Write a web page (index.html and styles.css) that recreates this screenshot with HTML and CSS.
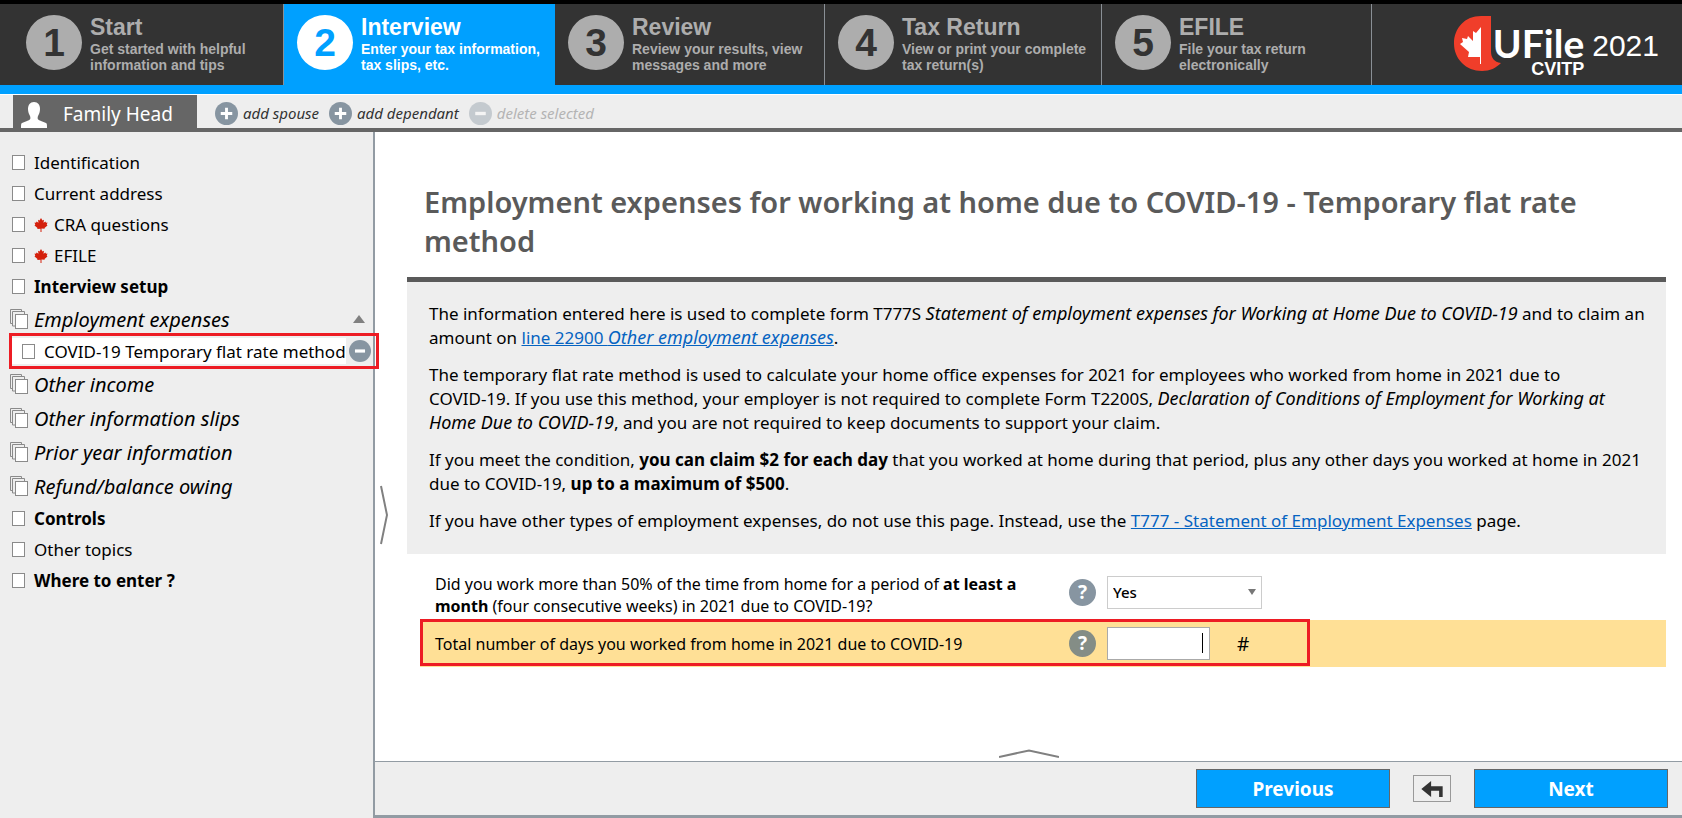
FILE: index.html
```html
<!DOCTYPE html>
<html lang="en">
<head>
<meta charset="utf-8">
<title>UFile CVITP 2021 - Interview</title>
<link rel="stylesheet" href="styles.css">
</head>
<body>
<svg class="defs" aria-hidden="true">
  <symbol id="page" viewBox="0 0 13 15"><rect x="0.5" y="0.5" width="12" height="14" fill="#fff" stroke="#8a8a8a"/></symbol>
  <symbol id="pages" viewBox="0 0 18 20"><path d="M.5 14.500V.5h11v14z" fill="#eee" stroke="#8a8a8a"/><path d="M2.500 17V2.500h12V17z" fill="#eee" stroke="#8a8a8a"/><rect x="5.500" y="5.500" width="12" height="14" fill="#fff" stroke="#8a8a8a"/></symbol>
  <symbol id="leaf" viewBox="0 0 26 28"><path d="M13 0l3 5 3-1.500-1 6 4-2.500 1 2.500 3-.500-1.500 4.500 1.500 1.500-6 5 .5 1.500-6.500-.5V28h-2v-6.500L5.500 22 6 20l-6-5 1.500-1.500L0 9l3 .5L4 7l4 2.500-1-6L10 5z" fill="#d4200c"/></symbol>
  <symbol id="plus" viewBox="0 0 24 24"><circle cx="12" cy="12" r="12" fill="#8795a1"/><path d="M12 6v12M6 12h12" stroke="#fff" stroke-width="3"/></symbol>
  <symbol id="minus" viewBox="0 0 24 24"><circle cx="12" cy="12" r="12" fill="#8795a1"/><path d="M6.500 12h11" stroke="#fff" stroke-width="3.500"/></symbol>
</svg>

<header class="header">
  <nav class="steps" aria-label="Steps">
    <a class="step step-first" href="#start"><span class="num">1</span><span class="step-text"><b class="step-title">Start</b><span class="step-sub">Get started with helpful<br>information and tips</span></span></a>
    <a class="step step-active" href="#interview"><span class="num">2</span><span class="step-text"><b class="step-title">Interview</b><span class="step-sub">Enter your tax information,<br>tax slips, etc.</span></span></a>
    <a class="step" href="#review"><span class="num">3</span><span class="step-text"><b class="step-title">Review</b><span class="step-sub">Review your results, view<br>messages and more</span></span></a>
    <a class="step step-wide" href="#return"><span class="num">4</span><span class="step-text"><b class="step-title">Tax Return</b><span class="step-sub">View or print your complete<br>tax return(s)</span></span></a>
    <a class="step" href="#efile"><span class="num">5</span><span class="step-text"><b class="step-title">EFILE</b><span class="step-sub">File your tax return<br>electronically</span></span></a>
  </nav>
  <div class="logo">
    <svg class="logo-mark" viewBox="0 0 47 55" aria-hidden="true">
      <path d="M37 0H27C11 0 0 12 0 27.500S12 55 28 55c8 0 14-3 19-8-7-1-10-5-10-12z" fill="#f03e2a"/>
      <path d="M27 11l-5 6-3-2v10l-5-5-1 3-5-1 1 4-3 2 9 8-1 5h12v7h1V11z" fill="#fff"/>
    </svg>
    <span class="logo-name"><span class="logo-ufile">UFile</span><span class="logo-sub">CVITP</span></span>
    <span class="logo-year">2021</span>
  </div>
</header>

<div class="toolbar">
  <button class="person" type="button"><svg class="person-icon" viewBox="0 0 26 26" aria-hidden="true"><path d="M13 0c4 0 6 3 6 7 0 3-1 5-2 7-1 3 0 4 3 5l5 2c1 .5 1 2 1 5H0c0-3 0-4.500 1-5l5-2c3-1 4-2 3-5-1-2-2-4-2-7 0-4 2-7 6-7z" fill="#fff"/></svg>Family Head</button>
  <div class="actions">
    <button class="action" type="button"><svg class="round" aria-hidden="true"><use href="#plus"/></svg>add spouse</button>
    <button class="action" type="button"><svg class="round" aria-hidden="true"><use href="#plus"/></svg>add dependant</button>
    <button class="action action-off" type="button" disabled><svg class="round" aria-hidden="true"><use href="#minus"/></svg>delete selected</button>
  </div>
</div>

<div class="body">
  <nav class="sidebar" aria-label="Topics">
    <a class="item" href="#i1"><svg class="page"><use href="#page"/></svg>Identification</a>
    <a class="item" href="#i2"><svg class="page"><use href="#page"/></svg>Current address</a>
    <a class="item" href="#i3"><svg class="page"><use href="#page"/></svg><svg class="leaf"><use href="#leaf"/></svg>CRA questions</a>
    <a class="item" href="#i4"><svg class="page"><use href="#page"/></svg><svg class="leaf"><use href="#leaf"/></svg>EFILE</a>
    <a class="item strong" href="#i5"><svg class="page"><use href="#page"/></svg>Interview setup</a>
    <a class="item group" href="#i6"><svg class="pages"><use href="#pages"/></svg>Employment expenses<svg class="caret-up" viewBox="0 0 12 8"><path d="M6 0l6 8H0z" fill="#808080"/></svg></a>
    <div class="selected">
      <a class="selected-link" href="#i7"><svg class="page"><use href="#page"/></svg>COVID-19 Temporary flat rate method</a>
      <button class="remove" type="button" aria-label="Remove"><svg class="remove-icon"><use href="#minus"/></svg></button>
    </div>
    <a class="item group" href="#i8"><svg class="pages"><use href="#pages"/></svg>Other income</a>
    <a class="item group" href="#i9"><svg class="pages"><use href="#pages"/></svg>Other information slips</a>
    <a class="item group" href="#i10"><svg class="pages"><use href="#pages"/></svg>Prior year information</a>
    <a class="item group" href="#i11"><svg class="pages"><use href="#pages"/></svg>Refund/balance owing</a>
    <a class="item strong" href="#i12"><svg class="page"><use href="#page"/></svg>Controls</a>
    <a class="item" href="#i13"><svg class="page"><use href="#page"/></svg>Other topics</a>
    <a class="item strong" href="#i14"><svg class="page"><use href="#page"/></svg>Where to enter ?</a>
  </nav>

  <div class="main">
    <button class="handle-side" type="button" aria-label="Resize topics"><svg class="handle-side-icon" viewBox="0 0 8 60"><path d="M1 1l6 29-6 29" fill="none" stroke="#808080" stroke-width="2"/></svg></button>
    <main class="content">
      <h1 class="title">Employment expenses for working at home due to COVID-19 - Temporary flat rate method</h1>
      <section class="info">
        <p>The information entered here is used to complete form T777S <i>Statement of employment expenses for Working at Home Due to COVID-19</i> and to claim an amount on <a href="#22900">line 22900 <i>Other employment expenses</i></a>.</p>
        <p>The temporary flat rate method is used to calculate your home office expenses for 2021 for employees who worked from home in 2021 due to <span class="keep">COVID-19. If</span> you use this method, your employer is not required to complete Form T2200S, <i>Declaration of Conditions of Employment for Working at Home Due to COVID-19</i>, and you are not required to keep documents to support your claim.</p>
        <p>If you meet the condition, <b>you can claim $2 for each day</b> that you worked at home during that period, plus any other days you worked at home in 2021 due to COVID-19, <b>up to a maximum of $500</b>.</p>
        <p>If you have other types of employment expenses, do not use this page. Instead, use the <a href="#t777">T777 - Statement of Employment Expenses</a> page.</p>
      </section>
      <form class="form">
        <div class="row">
          <label class="question" for="half">Did you work more than 50% of the time from home for a period of <b>at least a month</b> (four consecutive weeks) in 2021 due to COVID-19?</label>
          <button class="help" type="button" aria-label="Help">?</button>
          <span class="select-wrap"><select class="select" id="half"><option>Yes</option><option>No</option></select></span>
        </div>
        <div class="row row-current">
          <label class="question" for="days">Total number of days you worked from home in 2021 due to COVID-19</label>
          <button class="help help-current" type="button" aria-label="Help">?</button>
          <span class="input-wrap"><input class="input" id="days" type="text"></span>
          <span class="unit">#</span>
        </div>
      </form>
    </main>
    <button class="handle-up" type="button" aria-label="Show panel"><svg class="handle-up-icon" viewBox="0 0 60 9"><path d="M0 8l30-6.500L60 8" fill="none" stroke="#808080" stroke-width="2"/></svg></button>
    <footer class="footer">
      <button class="nav-btn" type="button">Previous</button>
      <button class="back" type="button" aria-label="Back"><svg class="back-icon" viewBox="0 0 24 18"><path d="M0 9l11-9v6h13v12h-4v-7h-9v7z" fill="#333"/></svg></button>
      <button class="nav-btn" type="button">Next</button>
    </footer>
  </div>
</div>
</body>
</html>
```

FILE: styles.css
```css
*, *::before, *::after { box-sizing: border-box; }
body {
  margin: 0;
  min-height: 100vh;
  display: flex;
  flex-direction: column;
  background: #fff;
  color: #000;
  font-family: "Noto Sans", "Open Sans", sans-serif;
  font-size: 17px;
}
button { font-family: inherit; border: 0; padding: 0; background: none; cursor: pointer; }
svg { display: block; flex: none; }
.defs { position: absolute; width: 0; height: 0; }

/* step header */
.header {
  display: flex;
  height: 94px;
  border-top: 4px solid #000;
  border-bottom: 9px solid #00a0ff;
  background: #333;
  font-family: "Liberation Sans", Arial, sans-serif;
}
.steps { display: flex; }
.step {
  display: flex;
  gap: 8px;
  width: 270px;
  padding: 11px 0 0 13px;
  border-right: 1px solid #8a9096;
  color: #adadad;
  text-decoration: none;
  white-space: nowrap;
}
.step-first { width: 284px; padding-left: 26px; }
.step-wide { width: 277px; }
.step-active { width: 271px; background: #00a0ff; border-right-color: #00a0ff; color: #fff; }
.num {
  flex: none;
  width: 56px;
  height: 55px;
  border-radius: 50%;
  background: #adadad;
  color: #333;
  font-size: 39px;
  font-weight: bold;
  line-height: 55px;
  text-align: center;
}
.step-active .num { background: #fff; color: #00a0ff; }
.step-text { font-weight: bold; }
.step-title { display: block; margin-bottom: 2px; font-size: 23px; line-height: 24px; }
.step-sub { display: block; font-size: 14px; line-height: 16px; }

.logo { flex: 1; display: flex; justify-content: flex-end; padding: 12px 23px 0 0; color: #fff; }
.logo-mark { width: 47px; height: 55px; margin-right: -8px; }
.logo-name { display: flex; flex-direction: column; align-items: flex-end; font-family: Lato, sans-serif; }
.logo-ufile { font-size: 39px; font-weight: bold; line-height: 46px; padding-top: 4px; }
.logo-sub { font-family: "Liberation Sans", Arial, sans-serif; font-size: 18px; font-weight: bold; line-height: 6px; }
.logo-year { margin-left: 8px; font-size: 30px; line-height: 60px; }

/* people toolbar */
.toolbar {
  display: flex;
  height: 38px;
  padding-left: 13px;
  border-top: 1px solid #fff;
  border-bottom: 4px solid #666;
  background: #eee;
}
.person { display: flex; align-items: center; gap: 16px; width: 184px; padding: 4px 0 0 8px; background: #666; color: #fff; font-size: 19px; }
.person-icon { width: 26px; height: 26px; margin-top: 2px; }
.actions { display: flex; align-items: center; gap: 10px; padding: 3px 0 0 18px; }
.action { display: flex; align-items: center; gap: 5px; color: #333; font-size: 15px; font-style: italic; }
.action-off { color: #b4b4b4; }
.action-off .round { opacity: .4; }
.round { width: 23px; height: 23px; }

/* sidebar */
.body { flex: 1; display: flex; }
.sidebar { flex: none; width: 375px; padding-top: 15px; border-right: 2px solid #929ba3; background: #eee; }
.item { display: flex; align-items: center; height: 31px; padding-left: 12px; color: #000; text-decoration: none; white-space: nowrap; }
.strong { font-weight: bold; }
.page { width: 13px; height: 15px; margin-right: 9px; }
.leaf { width: 14px; height: 14px; margin-right: 6px; }
.group { height: 34px; padding-left: 10px; font-size: 20px; font-style: italic; }
.pages { width: 18px; height: 20px; margin-right: 6px; }
.caret-up { width: 12px; height: 8px; margin: 0 8px 0 auto; }
.selected {
  position: relative;
  z-index: 1;
  display: flex;
  align-items: center;
  height: 36px;
  margin: -3px -6px -2px 9px;
  border: 3px solid #ed1c24;
}
.selected-link { flex: 1; display: flex; align-items: center; height: 26px; padding-left: 10px; background: #fff; color: #000; text-decoration: none; white-space: nowrap; }
.remove { margin: 0 5px 0 3px; }
.remove-icon { width: 22px; height: 22px; }

/* main column */
.main { position: relative; flex: 1; min-width: 0; display: flex; flex-direction: column; }
.handle-side { position: absolute; left: 5px; top: 353px; }
.handle-side-icon { width: 8px; height: 60px; }
.content { flex: 1; padding: 50px 16px 0 32px; }
.title { margin: 0; padding: 0 80px 17px 17px; color: #5a5a5a; font-size: 29px; font-weight: 600; line-height: 39px; }
.info { padding: 20px 16px 21px 22px; border-top: 5px solid #5a5a5a; background: #eee; line-height: 24px; }
.info p { margin: 0 0 13px; }
.info p:last-child { margin: 0; }
.info a { color: #0563c1; }
.info i { font-size: 18px; line-height: 20px; }
.keep { white-space: nowrap; }

.form { font-size: 16px; line-height: 22px; }
.row { display: flex; align-items: center; height: 47px; padding-left: 28px; }
.row:first-child { height: 66px; padding-top: 10px; }
.row:first-child .question { padding-top: 6px; }
.row-current { position: relative; margin-left: 13px; padding-left: 15px; background: #ffe096; }
.row-current::after {
  content: "";
  position: absolute;
  left: 0;
  top: -1px;
  width: 890px;
  height: 47px;
  border: 3px solid #ed1c24;
  pointer-events: none;
}
.question { width: 600px; padding-right: 10px; }
.help { width: 27px; height: 27px; margin: 0 11px 0 34px; border-radius: 50%; background: #8795a1; color: #fff; font-size: 19px; font-weight: bold; line-height: 27px; }
.help-current { background: #848d86; }
.select-wrap { position: relative; }
.select-wrap::after { content: ""; position: absolute; right: 6px; top: 13px; border: 4px solid transparent; border-top: 6px solid #777; border-bottom: 0; }
.select { display: block; width: 155px; height: 33px; padding: 0 5px; border: 1px solid #ccc; border-radius: 0; background: #fff; color: #000; appearance: none; font: 500 15px "Noto Sans", sans-serif; }
.input-wrap { position: relative; }
.input-wrap::after { content: ""; position: absolute; right: 7px; top: 6px; width: 1px; height: 20px; background: #000; }
.input { display: block; width: 103px; height: 33px; padding: 0 8px; border: 1px solid #aaa; background: #fff; font: 15px "Noto Sans", sans-serif; text-align: right; }
.unit { margin-left: 27px; font-size: 19px; }

.handle-up { align-self: center; margin-bottom: 3px; }
.handle-up-icon { width: 60px; height: 9px; }
.footer {
  display: flex;
  align-items: center;
  justify-content: flex-end;
  gap: 23px;
  height: 57px;
  padding-right: 14px;
  border-top: 1px solid #929ba3;
  border-bottom: 3px solid #929ba3;
  background: #eee;
}
.nav-btn { width: 194px; height: 39px; border: 1px solid #666; background: #00a0ff; color: #fff; font-size: 19px; font-weight: bold; }
.back { display: flex; align-items: center; justify-content: center; width: 38px; height: 27px; border: 1px solid #999; }
.back-icon { width: 24px; height: 16px; }
```
